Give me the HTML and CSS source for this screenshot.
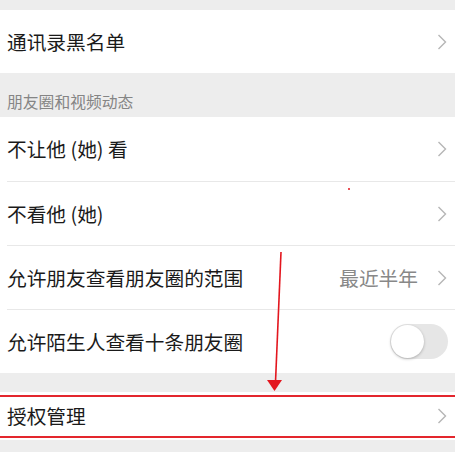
FILE: index.html
```html
<!DOCTYPE html>
<html lang="zh-CN">

<head>
  <meta charset="UTF-8" />
  <meta name="viewport" content="width=device-width, initial-scale=1.0" />
  <title>朋友权限</title>
  <link rel="stylesheet" href="styles.css">
</head>

<body>
  <div class="page">
    <div class="spacer-top"></div>

    <div class="group">
      <div class="cell cell-first">
        <span class="title">通讯录黑名单</span>
        <svg class="chevron" viewBox="0 0 10 16"><path d="M1.5 1 L8.5 8 L1.5 15" /></svg>
      </div>
    </div>

    <div class="section-label">朋友圈和视频动态</div>

    <div class="group">
      <div class="cell">
        <span class="title">不让他 (她) 看</span>
        <svg class="chevron" viewBox="0 0 10 16"><path d="M1.5 1 L8.5 8 L1.5 15" /></svg>
      </div>
      <div class="cell">
        <span class="title">不看他 (她)</span>
        <svg class="chevron" viewBox="0 0 10 16"><path d="M1.5 1 L8.5 8 L1.5 15" /></svg>
      </div>
      <div class="cell">
        <span class="title">允许朋友查看朋友圈的范围</span>
        <span class="value">最近半年</span>
        <svg class="chevron" viewBox="0 0 10 16"><path d="M1.5 1 L8.5 8 L1.5 15" /></svg>
      </div>
      <div class="cell">
        <span class="title">允许陌生人查看十条朋友圈</span>
        <div class="switch"><div class="knob"></div></div>
      </div>
    </div>

    <div class="spacer-mid"></div>

    <div class="group">
      <div class="cell cell-short">
        <span class="title">授权管理</span>
        <svg class="chevron" viewBox="0 0 10 16"><path d="M1.5 1 L8.5 8 L1.5 15" /></svg>
        <div class="highlight"></div>
      </div>
    </div>

    <!-- annotation arrow drawn over the list -->
    <svg class="annotation" viewBox="0 0 455 452">
      <line x1="281" y1="252" x2="275.5" y2="382" />
      <polygon points="267,380 282,380 274.5,391" />
      <circle cx="349" cy="189" r="1" />
    </svg>
  </div>
</body>

</html>
```

FILE: styles.css
```css
html, body { margin: 0; }
body {
  background: #ededed;
  font-family: "Noto Sans CJK SC", "Noto Sans", sans-serif;
  color: #1a1a1a;
  overflow: hidden;
}
.page { position: relative; width: 455px; height: 452px; }

.spacer-top { height: 10px; }
.spacer-mid { height: 19px; }

.group { background: #fff; padding-left: 7px; }

.cell {
  display: flex;
  align-items: center;
  height: 63px;
  padding-right: 8px;
  border-top: 1px solid #e8e8e8;
  position: relative;
}
.group .cell:first-child { border-top: none; height: 64px; }
.group .cell-first:first-child { height: 63px; }
.group .cell-short:first-child { height: 48px; }

.title { font-size: 19.7px; line-height: 24px; flex: 1; }
.value { font-size: 19.7px; line-height: 24px; color: #888; margin-right: 19px; }

.chevron {
  width: 10px;
  height: 16px;
  fill: none;
  stroke: #b6b6b6;
  stroke-width: 1.4;
}

.section-label {
  height: 16px;
  padding: 21px 0 7px 7px;
  font-size: 15.8px;
  line-height: 16px;
  color: #858585;
}

.switch {
  display: flex;
  align-items: center;
  width: 58px;
  height: 35px;
  box-sizing: border-box;
  padding: 1px;
  margin-right: -1px;
  border-radius: 18px;
  background: #e6e6e6;
}
.knob {
  width: 33px;
  height: 33px;
  border-radius: 50%;
  background: #fff;
  box-shadow: 0 1px 3px rgba(0, 0, 0, 0.25);
}

.highlight {
  position: absolute;
  left: -7px;
  right: 0;
  top: 3px;
  height: 39px;
  border-top: 2px solid #e3262d;
  border-bottom: 2px solid #e3262d;
}

.annotation {
  position: absolute;
  left: 0;
  top: 0;
  width: 455px;
  height: 452px;
  pointer-events: none;
}
.annotation line { stroke: #e3161e; stroke-width: 1.6; }
.annotation polygon, .annotation circle { fill: #e3161e; }
```
